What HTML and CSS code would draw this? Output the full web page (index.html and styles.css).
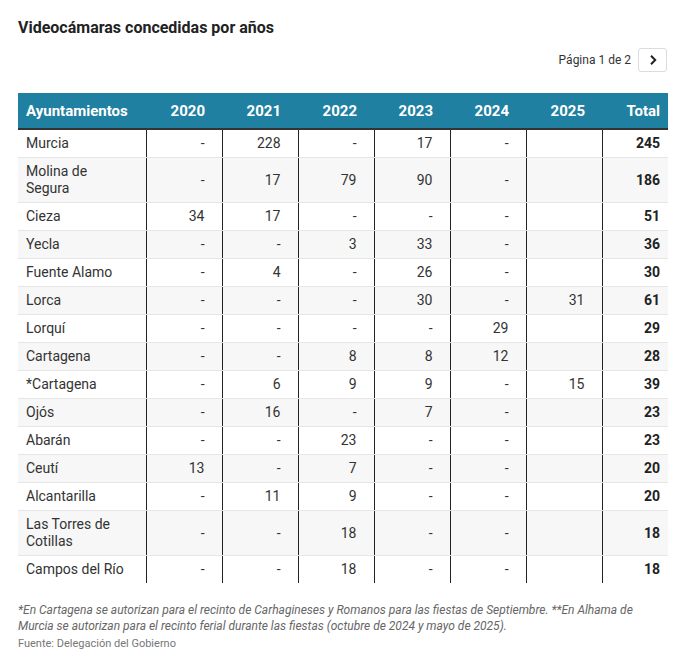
FILE: index.html
```html
<!DOCTYPE html>
<html lang="es">
<head>
<meta charset="utf-8">
<title>Videocámaras concedidas por años</title>
<link rel="stylesheet" href="styles.css">
</head>
<body>
<div class="chart">
  <h1 class="title">Videocámaras concedidas por años</h1>
  <div class="pager">
    <span class="pager-text">Página 1 de 2</span>
    <button class="pager-btn" type="button" aria-label="Siguiente">
      <svg width="12" height="12" viewBox="0 0 12 12"><path d="M4 1.8 L8.2 6 L4 10.2" fill="none" stroke="#222" stroke-width="2" stroke-linejoin="miter"/></svg>
    </button>
  </div>
  <table class="data">
    <colgroup>
      <col class="c-name"><col class="c-year"><col class="c-year"><col class="c-year"><col class="c-year"><col class="c-year"><col class="c-year"><col class="c-total">
    </colgroup>
    <thead>
      <tr><th class="name">Ayuntamientos</th><th>2020</th><th>2021</th><th>2022</th><th>2023</th><th>2024</th><th>2025</th><th class="total">Total</th></tr>
    </thead>
    <tbody>
      <tr><td class="name">Murcia</td><td>-</td><td>228</td><td>-</td><td>17</td><td>-</td><td></td><td class="total">245</td></tr>
      <tr><td class="name">Molina de Segura</td><td>-</td><td>17</td><td>79</td><td>90</td><td>-</td><td></td><td class="total">186</td></tr>
      <tr><td class="name">Cieza</td><td>34</td><td>17</td><td>-</td><td>-</td><td>-</td><td></td><td class="total">51</td></tr>
      <tr><td class="name">Yecla</td><td>-</td><td>-</td><td>3</td><td>33</td><td>-</td><td></td><td class="total">36</td></tr>
      <tr><td class="name">Fuente Alamo</td><td>-</td><td>4</td><td>-</td><td>26</td><td>-</td><td></td><td class="total">30</td></tr>
      <tr><td class="name">Lorca</td><td>-</td><td>-</td><td>-</td><td>30</td><td>-</td><td>31</td><td class="total">61</td></tr>
      <tr><td class="name">Lorquí</td><td>-</td><td>-</td><td>-</td><td>-</td><td>29</td><td></td><td class="total">29</td></tr>
      <tr><td class="name">Cartagena</td><td>-</td><td>-</td><td>8</td><td>8</td><td>12</td><td></td><td class="total">28</td></tr>
      <tr><td class="name">*Cartagena</td><td>-</td><td>6</td><td>9</td><td>9</td><td>-</td><td>15</td><td class="total">39</td></tr>
      <tr><td class="name">Ojós</td><td>-</td><td>16</td><td>-</td><td>7</td><td>-</td><td></td><td class="total">23</td></tr>
      <tr><td class="name">Abarán</td><td>-</td><td>-</td><td>23</td><td>-</td><td>-</td><td></td><td class="total">23</td></tr>
      <tr><td class="name">Ceutí</td><td>13</td><td>-</td><td>7</td><td>-</td><td>-</td><td></td><td class="total">20</td></tr>
      <tr><td class="name">Alcantarilla</td><td>-</td><td>11</td><td>9</td><td>-</td><td>-</td><td></td><td class="total">20</td></tr>
      <tr><td class="name">Las Torres de Cotillas</td><td>-</td><td>-</td><td>18</td><td>-</td><td>-</td><td></td><td class="total">18</td></tr>
      <tr><td class="name">Campos del Río</td><td>-</td><td>-</td><td>18</td><td>-</td><td>-</td><td></td><td class="total">18</td></tr>
    </tbody>
  </table>
  <p class="notes">*En Cartagena se autorizan para el recinto de Carhagineses y Romanos para las fiestas de Septiembre. **En Alhama de Murcia se autorizan para el recinto ferial durante las fiestas (octubre de 2024 y mayo de 2025).</p>
  <p class="source">Fuente: Delegación del Gobierno</p>
</div>
</body>
</html>
```
FILE: styles.css
```css
* { box-sizing: border-box; }
html, body { margin: 0; padding: 0; background: #fff; }
body {
  font-family: Roboto, "Liberation Sans", Arial, sans-serif;
  color: #333;
}
.chart {
  width: 650px;
  margin-left: 18px;
  padding-top: 18px;
}
.title {
  margin: 0;
  font-size: 16px;
  line-height: 20px;
  font-weight: 700;
  color: #222;
}
.pager {
  display: flex;
  justify-content: flex-end;
  align-items: center;
  gap: 7px;
  margin-top: 10px;
  height: 24px;
}
.pager-text {
  font-size: 12px;
  color: #333;
}
.pager-btn {
  width: 29px;
  height: 24px;
  margin: 0 1px 0 0;
  padding: 0;
  border: 1px solid #dcdcdc;
  border-radius: 3px;
  background: #fff;
  display: flex;
  align-items: center;
  justify-content: center;
}
.data {
  margin-top: 21px;
  width: 650px;
  border-collapse: collapse;
  table-layout: fixed;
  font-size: 14px;
}
.c-name { width: 128px; }
.c-year { width: 76px; }
.c-total { width: 66px; }
.data th {
  background: #1f80a1;
  color: #fff;
  font-weight: 700;
  font-size: 15px;
  height: 36px;
  padding: 0 17px 0 8px;
  text-align: right;
  border-bottom: 2px solid #333;
}
.data th.name { text-align: left; }
.data th.total, .data td.total { padding-right: 8px; }
.data td {
  padding: 5px 17px 5px 8px;
  line-height: 17px;
  text-align: right;
  color: #333;
  border-left: 1px solid #222;
  border-bottom: 1px solid #e6e6e6;
  vertical-align: middle;
}
.data td.name {
  text-align: left;
  border-left: none;
}
.data td.total { font-weight: 700; color: #222; }
.data tbody tr:nth-child(even) td { background: #f7f7f7; }
.data tbody tr:last-child td { border-bottom: none; }
.notes {
  margin: 19px 0 0;
  font-size: 12px;
  line-height: 16px;
  font-style: italic;
  color: #666;
}
.source {
  margin: 2px 0 0;
  font-size: 11px;
  line-height: 16px;
  color: #777;
}
```
